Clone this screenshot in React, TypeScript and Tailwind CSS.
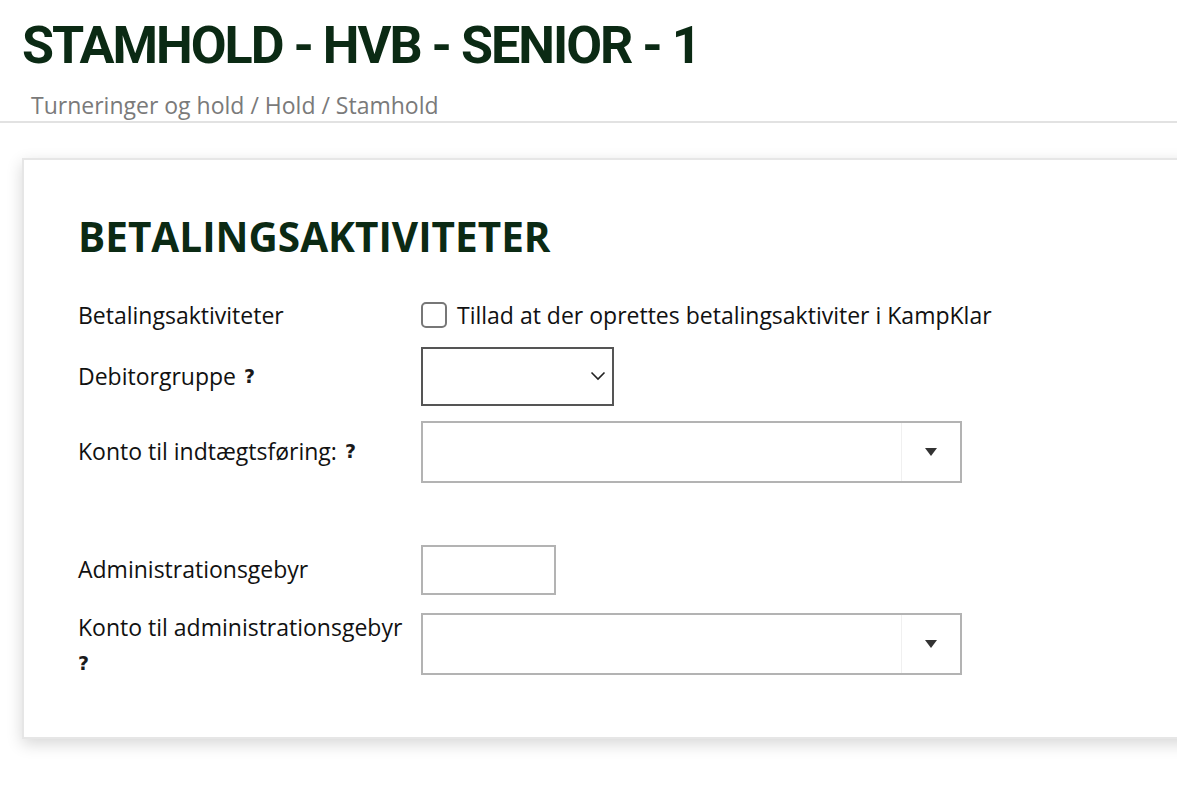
import React from 'react';

const Help = () => (
  <span className="ml-2 inline-block text-[19px] font-black leading-none text-[#1a1a1a] [font-family:'DejaVu_Sans',sans-serif]">?</span>
);

const SelectBox = () => (
  <div className="flex h-[62px] w-[541px] border-2 border-[#b3b3b3] bg-white">
    <div className="flex-1" />
    <div className="flex w-[59px] items-center justify-center border-l border-[#f0f0f0]">
      <svg width="14" height="10" viewBox="0 0 14 10">
        <path d="M1 1h12L7 9z" fill="#333" />
      </svg>
    </div>
  </div>
);

export default function App() {
  return (
    <div className="min-h-[803px] bg-white text-[#111] [font-family:'Open_Sans',sans-serif]">
      <div className="border-b-2 border-[#e2e2e2] pb-[2px]">
        <h1 className="pl-[22px] pt-[18px] text-[52px] font-bold leading-[56px] tracking-[-2px] text-[#0b2a14] [font-family:Roboto,sans-serif]">
          STAMHOLD - HVB - SENIOR - 1
        </h1>
        <div className="pl-[31px] pt-[17px] text-[23px] leading-[28px] text-[#7a7a7a]">
          Turneringer og hold / Hold / Stamhold
        </div>
      </div>

      <div className="overflow-hidden pb-[30px] pl-[22px] pt-[35px]">
        <div className="-mr-[40px] border-2 border-[#e6e6e6] bg-white pb-[62px] pl-[54px] pt-[55px] shadow-[0_5px_15px_rgba(0,0,0,0.16)]">
          <h2 className="text-[40.5px] font-bold leading-[44px] text-[#0b2a14]">
            BETALINGSAKTIVITETER
          </h2>

          <div className="mt-[39px] flex flex-col text-[23px]">
            <div className="flex items-center">
              <div className="w-[343px]">Betalingsaktiviteter</div>
              <label className="flex items-center gap-[10px]">
                <span className="h-[26px] w-[26px] rounded-[5px] border-2 border-[#777] bg-white" />
                <span>Tillad at der oprettes betalingsaktiviter i KampKlar</span>
              </label>
            </div>

            <div className="mt-[14px] flex items-center">
              <div className="flex w-[343px] items-center">
                Debitorgruppe
                <Help />
              </div>
              <div className="flex h-[59px] w-[193px] items-center justify-end border-2 border-[#555] bg-white pr-[6px]">
                <svg width="16" height="10" viewBox="0 0 16 10">
                  <path d="M1.5 1.5L8 8l6.5-6.5" fill="none" stroke="#222" strokeWidth="1.6" />
                </svg>
              </div>
            </div>

            <div className="mt-[15px] flex items-center">
              <div className="flex w-[343px] items-center">
                Konto til indtægtsføring:
                <Help />
              </div>
              <SelectBox />
            </div>

            <div className="mt-[62px] flex items-center">
              <div className="w-[343px]">Administrationsgebyr</div>
              <div className="h-[50px] w-[135px] border-2 border-[#b3b3b3] bg-white" />
            </div>

            <div className="mt-[18px] flex items-start">
              <div className="w-[343px] leading-[28px]">
                Konto til administrationsgebyr
                <div className="-ml-2 mt-[6px]">
                  <Help />
                </div>
              </div>
              <SelectBox />
            </div>
          </div>
        </div>
      </div>
    </div>
  );
}
